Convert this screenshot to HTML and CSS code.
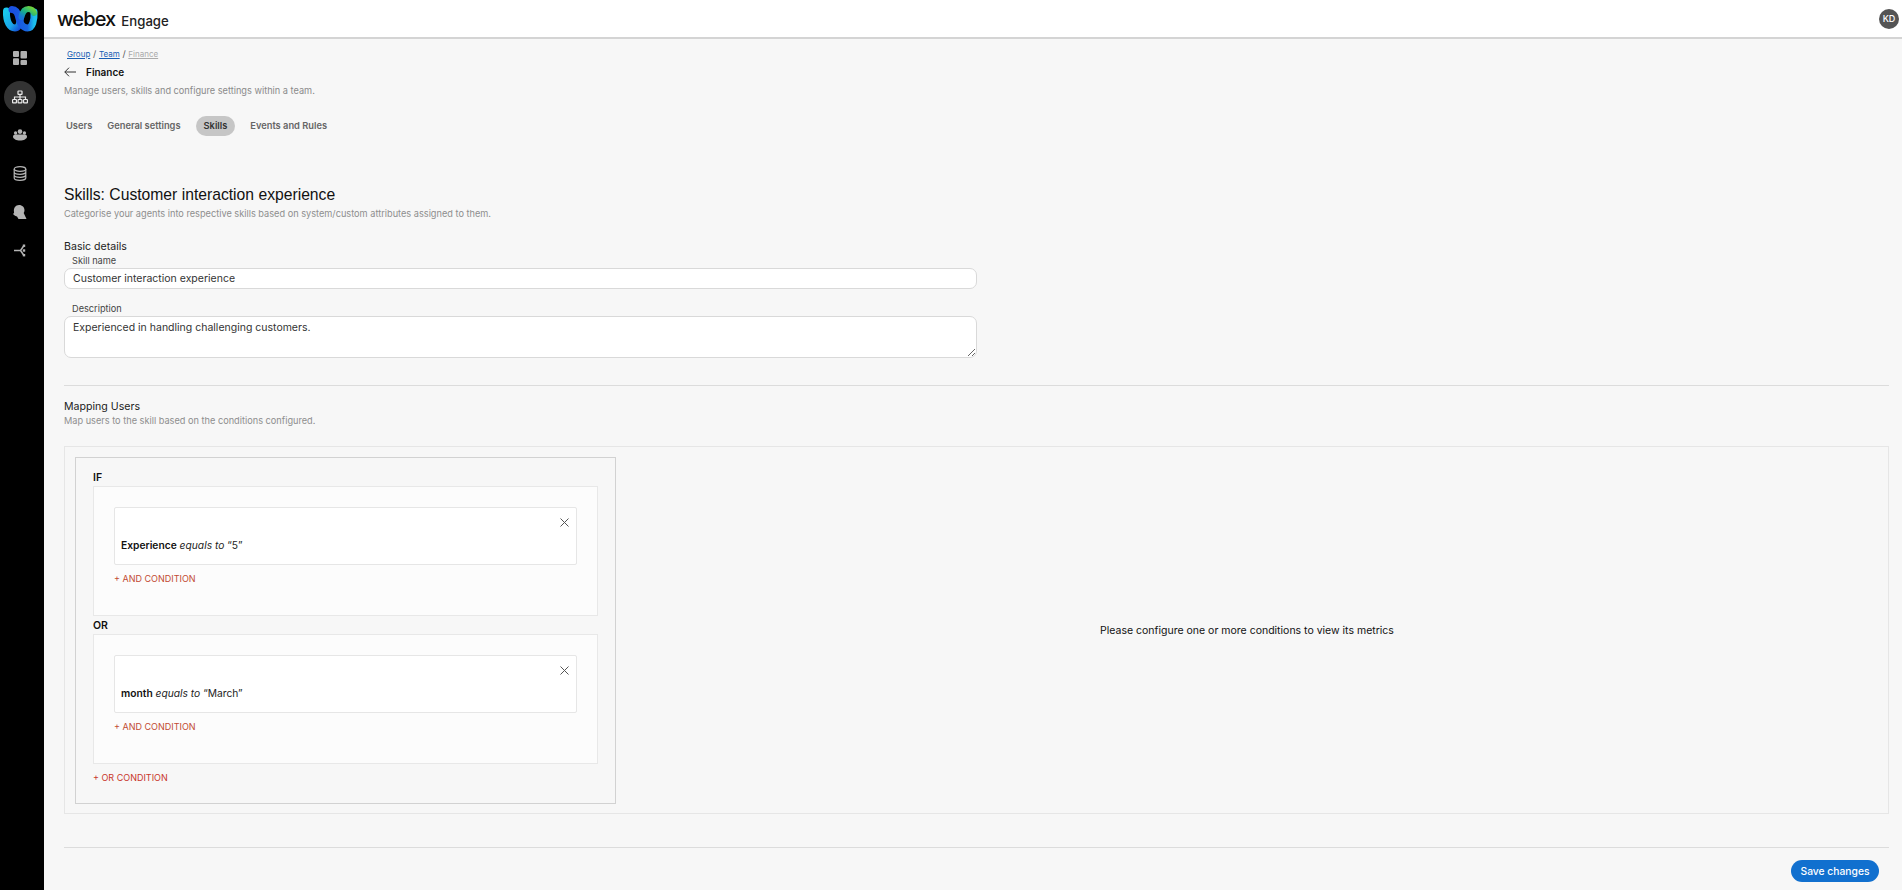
FILE: index.html
```html
<!DOCTYPE html>
<html lang="en">
<head>
<meta charset="utf-8">
<title>Webex Engage</title>
<link rel="stylesheet" href="styles.css">
</head>
<body>
<div class="app">
  <nav class="rail">
    <svg class="logo" width="36" height="27" viewBox="0 0 36 27" fill="none">
      <defs>
        <linearGradient id="lg1" x1="0" y1="0" x2="1" y2="1"><stop offset="0" stop-color="#19c8ee"/><stop offset=".6" stop-color="#1aa4e8"/><stop offset="1" stop-color="#1450d8"/></linearGradient>
        <linearGradient id="lg3" x1="0" y1="0" x2="1" y2="0"><stop offset="0" stop-color="#1a4fe0"/><stop offset=".7" stop-color="#1766e2"/><stop offset="1" stop-color="#1cc0ee"/></linearGradient>
        <linearGradient id="lg2" x1="0" y1="1" x2="1" y2="0"><stop offset="0" stop-color="#1578d8"/><stop offset=".45" stop-color="#17b08a"/><stop offset="1" stop-color="#6fd23c"/></linearGradient>
      </defs>
      <path d="M4.500 6C4 17 8 23 13 23c4 0 5-6 5.500-10" stroke="url(#lg1)" stroke-width="7" stroke-linecap="round"/>
      <path d="M10 4.500c4.500 0 6 4 7 9s4 9.500 8.500 9.500c5 0 7-8 6.500-16" stroke="url(#lg3)" stroke-width="7" stroke-linecap="round"/>
      <path d="M19.500 12c1-5 3.500-8 7-8 2.500 0 4.500 1 5.500 4" stroke="url(#lg2)" stroke-width="6" stroke-linecap="round"/>
    </svg>
    <a class="rail-item"><svg width="14" height="14" viewBox="0 0 14 14" fill="#b0b0b0"><rect x="0" y="0" width="6" height="6" rx="1"/><rect x="7.500" y="0" width="6.500" height="7.500" rx="1"/><rect x="0" y="7.200" width="6" height="6.800" rx="1"/><rect x="7.500" y="9" width="6.500" height="5" rx="1"/></svg></a>
    <a class="rail-item active"><svg width="16" height="14" viewBox="0 0 16 14" fill="none" stroke="#ececec" stroke-width="1.200"><rect x="6" y="1" width="4" height="3.400" rx=".5"/><path d="M8 4.400V7M2.500 9.500V7h11v2.500M8 7v2.500"/><rect x=".6" y="9.500" width="3.800" height="3.400" rx=".5"/><rect x="6.100" y="9.500" width="3.800" height="3.400" rx=".5"/><rect x="11.600" y="9.500" width="3.800" height="3.400" rx=".5"/></svg></a>
    <a class="rail-item"><svg width="14" height="12" viewBox="0 0 14 12" fill="#b4b4b4"><circle cx="7" cy="2.600" r="2.300"/><circle cx="2.600" cy="4" r="1.700"/><circle cx="11.400" cy="4" r="1.700"/><path d="M0 7.500C0 6 1.500 5.600 3 5.600h8c1.500 0 3 .4 3 1.900 0 2.500-3.400 4-7 4s-7-1.500-7-4z"/></svg></a>
    <a class="rail-item"><svg width="14" height="15" viewBox="0 0 14 15" fill="none" stroke="#b4b4b4" stroke-width="1.200"><ellipse cx="7" cy="3" rx="5.800" ry="2.300"/><path d="M1.200 3v9c0 1.300 2.600 2.300 5.800 2.300s5.800-1 5.800-2.300V3M1.200 6c0 1.300 2.600 2.300 5.800 2.300s5.800-1 5.800-2.300M1.200 9c0 1.300 2.600 2.300 5.800 2.300s5.800-1 5.800-2.300"/></svg></a>
    <a class="rail-item"><svg width="14" height="15" viewBox="0 0 14 15" fill="#b4b4b4"><path d="M6 0c3.300 0 5.500 2.400 5.500 5.300 0 1-.3 2-.8 2.800l2.800 5.900H5.500L4 11.500C2 11 .2 9.800 0 8.500c1 .2 1.200-.6 1-1.500C.4 3 2.500 0 6 0z"/></svg></a>
    <a class="rail-item"><svg width="12" height="13" viewBox="0 0 12 13" fill="none" stroke="#b4b4b4" stroke-width="1.500"><path d="M0 6.500h6.500M6.500 6.500L10 1.500M6.500 6.500L10 11.500"/><rect x="8.800" y=".5" width="2.400" height="2.400" fill="#b4b4b4" stroke="none"/><rect x="8.800" y="10" width="2.400" height="2.400" fill="#b4b4b4" stroke="none"/><rect x="8.800" y="5.300" width="2.400" height="2.400" fill="#b4b4b4" stroke="none"/></svg></a>
  </nav>
  <div class="main">
    <header class="topbar">
      <div class="brand"><span class="wordmark">webex</span><span class="product">Engage</span></div>
      <span class="avatar">KD</span>
    </header>
    <main class="content">
      <div class="crumbs"><a class="crumb-link">Group</a><span class="sep">/</span><a class="crumb-link">Team</a><span class="sep">/</span><a class="crumb-current">Finance</a></div>
      <div class="page-title">
        <svg width="12" height="10" viewBox="0 0 12 10" fill="none" stroke="#333" stroke-width="1"><path d="M12 5H.8M5 .7L.8 5 5 9.300"/></svg>
        <span>Finance</span>
      </div>
      <p class="page-desc">Manage users, skills and configure settings within a team.</p>
      <div class="tabs">
        <a class="tab">Users</a>
        <a class="tab">General settings</a>
        <a class="tab tab-active">Skills</a>
        <a class="tab">Events and Rules</a>
      </div>
      <h1 class="heading">Skills: Customer interaction experience</h1>
      <p class="subtle">Categorise your agents into respective skills based on system/custom attributes assigned to them.</p>
      <h2 class="section-title basic">Basic details</h2>
      <label class="field-label">Skill name</label>
      <input class="text-input" type="text" value="Customer interaction experience">
      <label class="field-label desc-label">Description</label>
      <textarea class="text-area">Experienced in handling challenging customers.</textarea>
      <hr class="rule rule-a">
      <h2 class="section-title">Mapping Users</h2>
      <p class="subtle map-sub">Map users to the skill based on the conditions configured.</p>
      <section class="panel">
        <div class="builder">
          <div class="group-label if-label">IF</div>
          <div class="group">
            <div class="condition">
              <svg class="close" width="9" height="9" viewBox="0 0 9 9" stroke="#555" stroke-width="1" fill="none"><path d="M.5.500l8 8M8.500.500l-8 8"/></svg>
              <p class="cond-text"><b>Experience</b> <i>equals to</i> “5”</p>
            </div>
            <a class="add">+ AND CONDITION</a>
          </div>
          <div class="group-label">OR</div>
          <div class="group">
            <div class="condition">
              <svg class="close" width="9" height="9" viewBox="0 0 9 9" stroke="#555" stroke-width="1" fill="none"><path d="M.5.500l8 8M8.500.500l-8 8"/></svg>
              <p class="cond-text"><b>month</b> <i>equals to</i> “March”</p>
            </div>
            <a class="add">+ AND CONDITION</a>
          </div>
          <a class="add add-or">+ OR CONDITION</a>
        </div>
        <div class="metrics">Please configure one or more conditions to view its metrics</div>
      </section>
      <hr class="rule rule-b">
      <div class="actions"><button class="save">Save changes</button></div>
    </main>
  </div>
</div>
</body>
</html>
```
FILE: styles.css
```css
* { box-sizing: border-box; }
html, body { margin: 0; height: 100%; overflow: hidden; }
body { font-family: Inter, "Liberation Sans", sans-serif; color: #121212; background: #f7f7f7; }
.app { display: flex; height: 890px; }
.rail { width: 44px; flex: none; background: #000; display: flex; flex-direction: column; align-items: center; padding-right: 4px; }
.logo { margin-top: 5px; margin-bottom: 3px; flex: none; }
.rail-item { width: 32px; height: 32px; border-radius: 50%; display: flex; align-items: center; justify-content: center; margin-top: 6.500px; }
.rail-item:first-of-type { margin-top: 7px; }
.rail-item.active { background: #333; }
.main { flex: 1; min-width: 0; display: flex; flex-direction: column; }
.topbar { height: 39px; flex: none; background: #fff; border-bottom: 2px solid #d4d4d4; display: flex; align-items: center; justify-content: space-between; padding: 0 3px 0 13px; }
.brand { display: flex; align-items: baseline; gap: 6px; }
.wordmark { font-family: Inter, sans-serif; font-size: 20px; font-weight: 500; letter-spacing: -.9px; color: #111; }
.product { font-size: 13.200px; font-weight: 500; color: #222; }
.avatar { width: 20px; height: 20px; border-radius: 50%; background: #545454; color: #fff; font-size: 9px; font-weight: 500; display: flex; align-items: center; justify-content: center; }
.content { flex: 1; padding: 9px 13px 0 20px; display: flex; flex-direction: column; align-items: stretch; }
.crumbs { font-size: 8px; line-height: 11px; padding-left: 3px; color: #555; }
.sep { margin: 0 2.700px; font-size: 9px; }
.crumb-link { color: #1a5fb4; text-decoration: underline; }
.crumb-current { color: #aaa; text-decoration: underline; }
.page-title { display: flex; align-items: center; gap: 10px; font-size: 10px; font-weight: 600; line-height: 14px; margin-top: 5px; }
.page-desc { margin: 5px 0 0; font-size: 9.200px; line-height: 14px; color: #8a8a8a; }
.tabs { display: flex; align-items: center; gap: 0; margin-top: 18px; height: 20px; }
.tab { font-size: 9.300px; font-weight: 600; color: #666; height: 20px; line-height: 20px; border-radius: 10px; }
.tab:first-child { padding-left: 2px; margin-right: 15px; }
.tab:nth-child(2) { margin-right: 15px; }
.tab-active { background: #c6c6c6; color: #333; padding: 0 8px; margin-right: 15px; }
.heading { margin: 48px 0 0; font-family: "Liberation Sans", Arial, sans-serif; font-size: 15.700px; font-weight: 400; line-height: 22px; color: #111; }
.subtle { margin: 1px 0 0; font-size: 9.200px; line-height: 13px; color: #8e8e8e; }
.section-title { margin: 0; font-size: 10.600px; font-weight: 400; line-height: 14px; color: #222; }
.basic { margin-top: 20px; }
.field-label { display: block; font-size: 9.200px; line-height: 13px; color: #444; padding-left: 8px; }
.desc-label { margin-top: 13px; }
.text-input, .text-area { display: block; width: 913px; border: 1px solid #d9d9d9; background: #fff; border-radius: 7px; font-family: inherit; font-size: 10.500px; color: #333; padding: 0 8px; }
.text-input { height: 21px; margin-top: 1px; outline: 0; }
.text-area { height: 42px; margin-top: 1px; padding-top: 4px; line-height: 14px; }
.rule { width: 100%; border: 0; border-top: 1px solid #dcdcdc; margin: 0; flex: none; }
.rule-a { margin-top: 27px; margin-bottom: 14px; }
.map-sub { margin-top: 0; }
.panel { height: 368px; margin-top: 19px; border: 1px solid #e6e6e6; padding: 10px; display: flex; flex: none; }
.builder { width: 541px; height: 347px; border: 1px solid #d2d2d2; padding: 13px 17px 0; flex: none; display: flex; flex-direction: column; align-items: flex-start; }
.group-label { font-size: 10.500px; font-weight: 600; line-height: 13px; height: 16px; color: #111; padding-top: 1px; }
.if-label { padding-top: 0; height: 15px; }
.group { width: 100%; height: 130px; background: #fcfcfc; border: 1px solid #e8e8e8; padding: 20px 20px 0; margin-bottom: 2px; }
.condition { height: 58px; background: #fff; border: 1px solid #e6e6e6; border-radius: 2px; padding: 30px 6px 0; position: relative; }
.close { position: absolute; top: 10px; right: 7px; }
.cond-text { margin: 0; font-size: 10.250px; line-height: 14px; color: #222; }
.cond-text b { font-weight: 600; color: #111; }
.add { display: block; margin-top: 7px; font-size: 9px; line-height: 13px; color: #c24a32; }
.add-or { margin-top: 5px; color: #c9362b; }
.metrics { flex: 1; display: flex; align-items: center; justify-content: center; font-size: 10.500px; color: #111; }
.rule-b { margin-top: 33px; }
.actions { display: flex; justify-content: flex-end; padding: 12px 10px 0 0; }
.save { width: 88px; height: 22px; border: 0; border-radius: 11px; background: #1170cf; color: #fff; font-family: inherit; font-size: 10.300px; font-weight: 500; padding: 0; }
```
